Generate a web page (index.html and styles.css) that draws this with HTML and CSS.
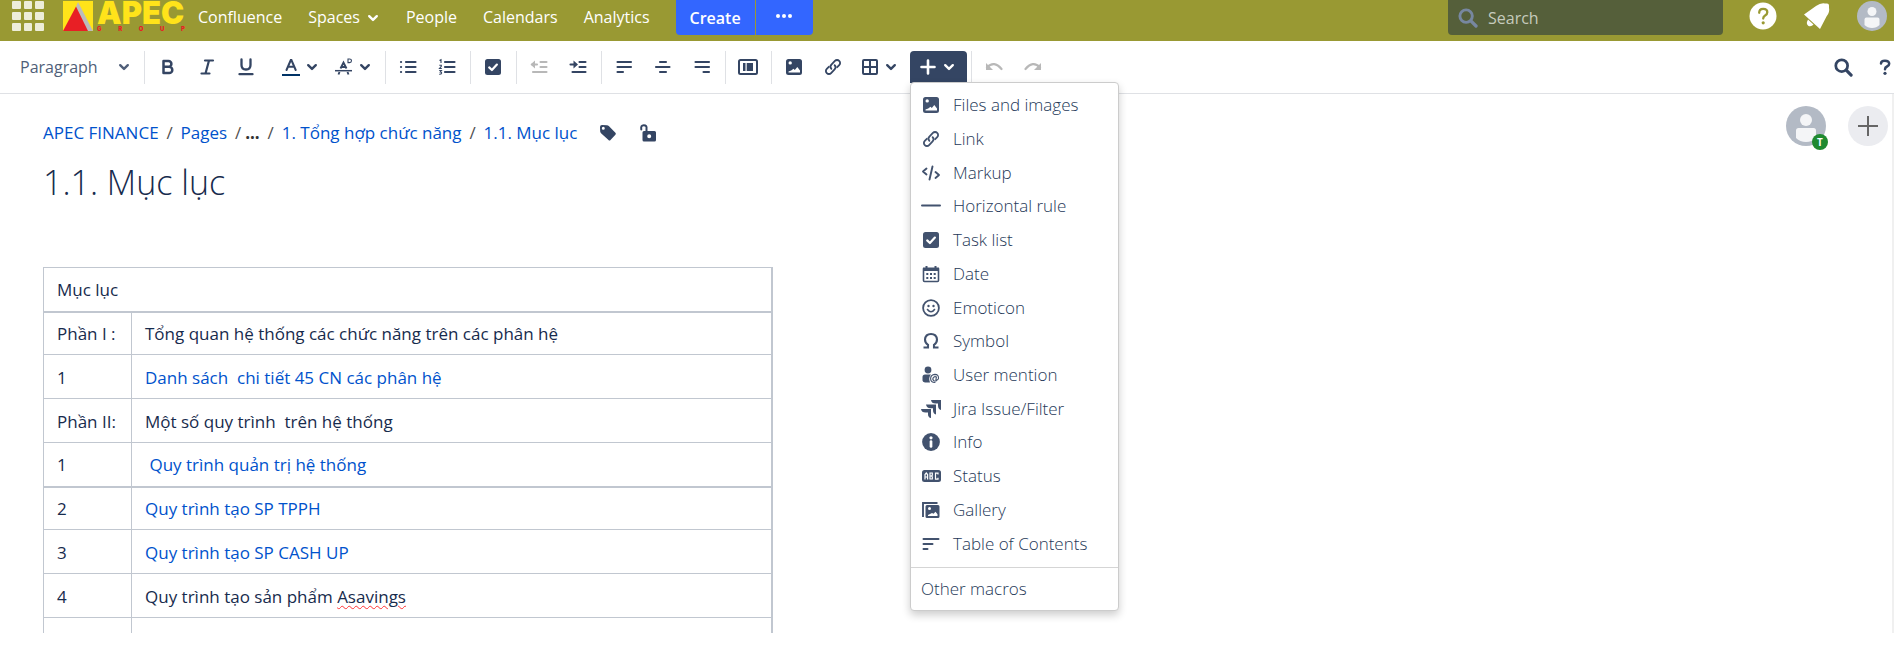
FILE: index.html
```html
<!DOCTYPE html>
<html lang="vi">
<head>
    <meta charset="UTF-8">
    <meta name="viewport" content="width=device-width, initial-scale=1.0">
    <title>1.1. Mục lục - Confluence</title>
    <link rel="stylesheet" href="styles.css">
</head>
<body>
    <!-- shared icons -->
    <svg class="sprite" aria-hidden="true">
        <symbol id="i-chevron" viewBox="0 0 14 14"><path d="M3.2 5.2 7 8.9l3.8-3.7" fill="none" stroke="currentColor" stroke-width="2.4" stroke-linecap="round" stroke-linejoin="round"/></symbol>
        <symbol id="i-image" viewBox="0 0 18 18"><path fill="currentColor" fill-rule="evenodd" d="M3.5 1h11A2.5 2.5 0 0 1 17 3.500v11a2.500 2.500 0 0 1-2.500 2.500h-11A2.500 2.500 0 0 1 1 14.500v-11A2.500 2.500 0 0 1 3.500 1zM5.200 3.200a1.700 1.700 0 1 0 0 3.400 1.700 1.700 0 0 0 0-3.400zM3.500 14.500h11.500v-2l-2.700-3.500-2.500 3-1.300-1.200-2.300 1.700-2.700 1z"/></symbol>
        <symbol id="i-link" viewBox="0 0 18 18"><g fill="none" stroke="currentColor" stroke-width="1.800" stroke-linecap="round"><path d="M7.400 10.800a3 3 0 0 1 0-4.200l3.500-3.700a3 3 0 0 1 4.300 0 3 3 0 0 1 0 4.300l-2 2"/><path d="M10.600 7.200a3 3 0 0 1 0 4.200l-3.500 3.700a3 3 0 0 1-4.300 0 3 3 0 0 1 0-4.300l2-2"/></g></symbol>
        <symbol id="i-check" viewBox="0 0 18 18"><rect x="1" y="1" width="16" height="16" rx="2.500" fill="currentColor"/><path d="M5.200 9.400l2.700 2.600 5-5.400" fill="none" stroke="#fff" stroke-width="2.200" stroke-linecap="round" stroke-linejoin="round"/></symbol>
        <symbol id="i-search" viewBox="0 0 18 18"><circle cx="7.300" cy="7.300" r="5.600" fill="none" stroke="currentColor" stroke-width="2.600"/><path d="M11.800 11.800l4.400 4.400" stroke="currentColor" stroke-width="3" stroke-linecap="round"/></symbol>
        <symbol id="i-user" viewBox="0 0 40 40"><circle cx="20" cy="20" r="20" fill="#b3bac5"/><circle cx="20" cy="14" r="6" fill="#f4f5f7"/><path d="M10 24.500A2.500 2.500 0 0 1 12.500 22h15a2.500 2.500 0 0 1 2.500 2.500V32q-4 4-10 4t-10-4z" fill="#f4f5f7"/></symbol>
    </svg>

    <header class="header">
        <button class="apps" aria-label="Linked applications">
            <svg width="32" height="32" viewBox="0 0 32 32" fill="#ededd9"><rect x="0" y="1" width="9" height="8" rx="1"/><rect x="12" y="1" width="8" height="8" rx="1"/><rect x="23" y="1" width="9" height="8" rx="1"/><rect x="0" y="12" width="9" height="8" rx="1"/><rect x="12" y="12" width="8" height="8" rx="1"/><rect x="23" y="12" width="9" height="8" rx="1"/><rect x="0" y="23" width="9" height="8" rx="1"/><rect x="12" y="23" width="8" height="8" rx="1"/><rect x="23" y="23" width="9" height="8" rx="1"/></svg>
        </button>
        <a class="logo" href="#" aria-label="Apec Group">
            <svg width="30" height="30" viewBox="0 0 30 30"><path fill="#ffe31a" d="M0 0h30v30H0z"/><path fill="#bcbcbc" d="M15 1 30 30h-6L13 6z"/><path fill="#e81f25" d="M13 5.500 25 30H0z"/></svg>
            <span class="logo-text">
                <span class="logo-name">APEC</span>
                <span class="logo-sub"><span>G</span><span>R</span><span>O</span><span>U</span><span>P</span></span>
            </span>
        </a>
        <nav class="nav">
            <a href="#">Confluence</a>
            <a href="#">Spaces<svg width="14" height="14"><use href="#i-chevron"/></svg></a>
            <a href="#">People</a>
            <a href="#">Calendars</a>
            <a href="#">Analytics</a>
        </nav>
        <div class="create">
            <button class="create-main">Create</button>
            <button class="create-more" aria-label="Create from template"><svg width="18" height="6" viewBox="0 0 18 6" fill="#fff"><circle cx="3" cy="3" r="2"/><circle cx="9" cy="3" r="2"/><circle cx="15" cy="3" r="2"/></svg></button>
        </div>
        <div class="header-right">
            <label class="search">
                <svg width="20" height="20"><use href="#i-search"/></svg>
                <input type="text" placeholder="Search" aria-label="Search">
            </label>
            <button aria-label="Help"><svg width="28" height="28" viewBox="0 0 28 28"><circle cx="14" cy="14" r="13.500" fill="#fff"/><path d="M10.200 10.800q0-4 4-4 4.100 0 4.100 3.500 0 2-2.200 3.300-1.900 1.100-1.900 3" fill="none" stroke="#993" stroke-width="2.300" stroke-linecap="round"/><circle cx="14.200" cy="20.800" r="1.600" fill="#993"/></svg></button>
            <button aria-label="Notifications"><svg width="28" height="28" viewBox="0 0 28 28" fill="#fff"><path d="M1 12.500 13 4q5-3.500 9-2.500h2q2 0 2 2v2q1 5-2.500 9L17 27z"/><path d="M5 17.500 10.500 22.500Q8.500 25 5.500 24 2.500 22 5 17.500z"/></svg></button>
            <button aria-label="Profile"><svg width="30" height="30"><use href="#i-user"/></svg></button>
        </div>
    </header>

    <div class="toolbar">
        <button class="format">Paragraph <svg width="14" height="14"><use href="#i-chevron"/></svg></button>
        <div class="group group-text">
            <button aria-label="Bold"><svg width="18" height="18" viewBox="0 0 18 18"><path d="M4.500 3h5a2.900 2.900 0 0 1 0 5.800h-5zM4.500 8.800h5.700a3.100 3.100 0 0 1 0 6.200H4.500z" fill="none" stroke="currentColor" stroke-width="2.500" stroke-linejoin="round"/></svg></button>
            <button aria-label="Italic"><svg width="18" height="18" viewBox="0 0 18 18"><path d="M7 2.500h8M3.500 15.500h8M11 2.500l-3.500 13" fill="none" stroke="currentColor" stroke-width="2.200" stroke-linecap="round"/></svg></button>
            <button aria-label="Underline"><svg width="18" height="18" viewBox="0 0 18 18"><path d="M4.500 1.500V7q0 4.500 4.500 4.500T13.500 7V1.500M2.500 16.200h13" fill="none" stroke="currentColor" stroke-width="2.300" stroke-linecap="round"/></svg></button>
            <button class="drop first" aria-label="Text colour"><svg width="18" height="18" viewBox="0 0 18 18"><path d="M4.500 12 8.800 2h.6l4.300 10M6 8.800h6.300" fill="none" stroke="currentColor" stroke-width="2" stroke-linecap="round"/><path d="M0 17h18" stroke="#003366" stroke-width="2"/></svg><svg width="14" height="14"><use href="#i-chevron"/></svg></button>
            <button class="drop" aria-label="More formatting"><svg width="18" height="18" viewBox="0 0 18 18" fill="none" stroke="currentColor"><path d="M5.500 10.500 8.500 4.500l3 6M4.500 14l-1 2.500M12.500 14l1 2.500M6 9h5" stroke-width="1.900"/><path d="M0 12.700h17" stroke-width="1.500"/><path d="M13 1h1.500q2 0 2 1.800T14.500 4.600H13z" stroke-width="1.100"/></svg><svg width="14" height="14"><use href="#i-chevron"/></svg></button>
        </div>
        <div class="group">
            <button aria-label="Bullet list"><svg width="18" height="18" viewBox="0 0 18 18"><path d="M7 4h9.500M7 9h9.500M7 14h9.500M2 4h.1M2 9h.1M2 14h.1" stroke="currentColor" stroke-width="2.200" stroke-linecap="round"/></svg></button>
            <button aria-label="Numbered list"><svg width="18" height="18" viewBox="0 0 18 18" fill="none" stroke="currentColor"><path d="M7 4h9.500M7 9h9.500M7 14h9.500" stroke-width="2.200" stroke-linecap="round"/><path d="M1.500 2.500 3 1.700V5M1.300 7.300h2v1L1.500 10.500h2.300M1.200 12.500h2.300L2.300 14q1.500 0 1.300 1.200T1.200 16.300" stroke-width="1.100"/></svg></button>
        </div>
        <div class="group">
            <button aria-label="Task list"><svg width="18" height="18"><use href="#i-check"/></svg></button>
        </div>
        <div class="group">
            <button class="off" aria-label="Outdent" disabled><svg width="18" height="18" viewBox="0 0 18 18"><path d="M10.500 4h6M10.500 9h6M3 14h13.500M2 6.500h5" stroke="currentColor" stroke-width="2.100" stroke-linecap="round"/><path d="M5 2.500v8L0.500 6.500z" fill="currentColor"/></svg></button>
            <button aria-label="Indent"><svg width="18" height="18" viewBox="0 0 18 18"><path d="M10.500 4h6M10.500 9h6M3.500 14h13M1.500 6.500h5" stroke="currentColor" stroke-width="2.100" stroke-linecap="round"/><path d="M4.500 2.500v8L9 6.500z" fill="currentColor"/></svg></button>
        </div>
        <div class="group">
            <button aria-label="Align left"><svg width="18" height="18" viewBox="0 0 18 18"><path d="M2.500 4h13.500M2.500 9h13.500M2.500 14h5.500" stroke="currentColor" stroke-width="2.100" stroke-linecap="round"/></svg></button>
            <button aria-label="Align center"><svg width="18" height="18" viewBox="0 0 18 18"><path d="M6 4h6M2 9h13.500M6 14h6" stroke="currentColor" stroke-width="2.100" stroke-linecap="round"/></svg></button>
            <button aria-label="Align right"><svg width="18" height="18" viewBox="0 0 18 18"><path d="M2.500 4H16M2.500 9H16M10.500 14H16" stroke="currentColor" stroke-width="2.100" stroke-linecap="round"/></svg></button>
        </div>
        <div class="group">
            <button aria-label="Page layout"><svg width="20" height="18" viewBox="0 0 20 18"><rect x="1" y="2" width="18" height="14" rx="1.500" fill="none" stroke="currentColor" stroke-width="2"/><path d="M5 5h2.500v8H5zM8.700 5H15v8H8.700z" fill="currentColor"/></svg></button>
        </div>
        <div class="group">
            <button aria-label="Files and images"><svg width="18" height="18"><use href="#i-image"/></svg></button>
            <button aria-label="Link"><svg width="18" height="18"><use href="#i-link"/></svg></button>
            <button class="drop" aria-label="Table"><svg width="18" height="18" viewBox="0 0 18 18"><path d="M3 2h12a1 1 0 0 1 1 1v12a1 1 0 0 1-1 1H3a1 1 0 0 1-1-1V3a1 1 0 0 1 1-1zM9 2v14M2 9h14" fill="none" stroke="currentColor" stroke-width="2"/></svg><svg width="14" height="14"><use href="#i-chevron"/></svg></button>
            <div class="insert">
                <button class="drop insert-toggle" aria-label="Insert more content" aria-expanded="true"><svg width="18" height="18" viewBox="0 0 18 18"><path d="M9 2.500v13M2.500 9h13" stroke="currentColor" stroke-width="2.600" stroke-linecap="round"/></svg><svg width="14" height="14"><use href="#i-chevron"/></svg></button>
                <div class="menu">
                    <ul>
                        <li><a href="#"><svg width="20" height="18"><use href="#i-image"/></svg>Files and images</a></li>
                        <li><a href="#"><svg width="20" height="18"><use href="#i-link"/></svg>Link</a></li>
                        <li><a href="#"><svg width="20" height="18" viewBox="0 0 20 18"><path d="M5.500 4.500 2 7.500l3.500 3M14.500 8l3.500 3-3.500 3M11.500 2.500 8.500 15.500" fill="none" stroke="currentColor" stroke-width="1.900" stroke-linecap="round" stroke-linejoin="round"/></svg>Markup</a></li>
                        <li><a href="#"><svg width="20" height="18" viewBox="0 0 20 18"><path d="M1 8.500h18" stroke="currentColor" stroke-width="2" stroke-linecap="round"/></svg>Horizontal rule</a></li>
                        <li><a href="#"><svg width="20" height="18"><use href="#i-check"/></svg>Task list</a></li>
                        <li><a href="#"><svg width="20" height="18" viewBox="0 0 20 18"><path d="M2.500 4h15v11.500a1 1 0 0 1-1 1h-13a1 1 0 0 1-1-1z" fill="none" stroke="currentColor" stroke-width="1.600"/><path d="M2 2.500h16V6H2z" fill="currentColor"/><path d="M5.500 1v3M14.500 1v3" stroke="currentColor" stroke-width="2"/><path d="M5.300 9h2M9 9h2M12.700 9h2M5.300 13h2M9 13h2M12.700 13h2" stroke="currentColor" stroke-width="2"/></svg>Date</a></li>
                        <li><a href="#"><svg width="20" height="18" viewBox="0 0 20 18"><circle cx="10" cy="9" r="7.900" fill="none" stroke="currentColor" stroke-width="1.800"/><circle cx="7.500" cy="7" r="1.200" fill="currentColor"/><circle cx="12.500" cy="7" r="1.200" fill="currentColor"/><path d="M6.500 10.500q3.500 4.500 7 0" fill="none" stroke="currentColor" stroke-width="1.600" stroke-linecap="round"/></svg>Emoticon</a></li>
                        <li><a href="#"><svg width="20" height="18" viewBox="0 0 20 18"><path d="M2.500 15.500H7v-2.700Q4 11 4 7.500 4.500 2 10 2t6 5.500q0 3.500-3 5.300v2.700h4.500" fill="none" stroke="currentColor" stroke-width="2.100"/></svg>Symbol</a></li>
                        <li><a href="#"><svg width="20" height="18" viewBox="0 0 20 18"><circle cx="7" cy="4" r="3.400" fill="currentColor"/><path d="M1.500 11a2.500 2.500 0 0 1 2.500-2.500h6Q7 12 9 16.500H4q-2.500-.5-2.500-2z" fill="currentColor"/><path d="M15.800 14.500q-1.500.8-2.800.3-1.800-.9-.8-3 1.300-2 3.200-.8l-.5 2.800q2 .7 2.600-1.500.2-3.700-3.600-3.900-4.200.3-4.300 4.300.3 4 4.800 3.800" fill="none" stroke="currentColor" stroke-width="1.100"/></svg>User mention</a></li>
                        <li><a href="#"><svg width="20" height="18" viewBox="0 0 20 18"><path d="M10 0h10v10q-3-.8-3-4.500V3.500h-2.500Q10.500 3.500 10 0zM5 4.500h10v10q-3-.8-3-4.500V8.200H9.500Q5.500 8 5 4.500zM0 9h10v9q-3-.5-3-3.800v-1.700H4.500Q.5 12.500 0 9z" fill="currentColor"/></svg>Jira Issue/Filter</a></li>
                        <li><a href="#"><svg width="20" height="18" viewBox="0 0 20 18"><circle cx="10" cy="9" r="8.900" fill="currentColor"/><circle cx="10" cy="4.800" r="1.600" fill="#fff"/><path d="M10 8.500v5" stroke="#fff" stroke-width="2.700" stroke-linecap="round"/></svg>Info</a></li>
                        <li><a href="#"><svg width="20" height="18" viewBox="0 0 20 18"><rect x="1" y="3" width="19" height="12" rx="2.500" fill="currentColor"/><path d="M4 12.500V7.500l1.300-1.500 1.300 1.500v5M4 10h2.600M9 6v6h2.300V9.800L10.500 9l.8-.8V6zM17 7.500V6.200h-2.500v5.900H17v-1.300M9 9h2" fill="none" stroke="#fff" stroke-width="1.200"/></svg>Status</a></li>
                        <li><a href="#"><svg width="20" height="18" viewBox="0 0 20 18"><path d="M2 16V2h14.500" fill="none" stroke="currentColor" stroke-width="1.900"/><path fill="currentColor" fill-rule="evenodd" d="M6 4h11a1.500 1.500 0 0 1 1.500 1.500v10A1.500 1.500 0 0 1 17 17H6a1.500 1.500 0 0 1-1.500-1.500v-10A1.500 1.500 0 0 1 6 4zm2.500 2a1.500 1.500 0 1 0 0 3 1.500 1.500 0 0 0 0-3zM7 15h9.500v-1.800l-2-2.500-2 2-1.500-.7-4 2z"/></svg>Gallery</a></li>
                        <li><a href="#"><svg width="20" height="18" viewBox="0 0 20 18"><path d="M2.500 4h15M2.500 9h9M2.500 14h4" stroke="currentColor" stroke-width="2" stroke-linecap="round"/></svg>Table of Contents</a></li>
                    </ul>
                    <a class="other" href="#">Other macros</a>
                </div>
            </div>
        </div>
        <div class="group">
            <button class="off" aria-label="Undo" disabled><svg width="18" height="18" viewBox="0 0 18 18"><path d="M2 9.500q7-7.500 14.500 1.500" fill="none" stroke="currentColor" stroke-width="2.200" stroke-linecap="round"/><path d="M1 5v7h7z" fill="currentColor"/></svg></button>
            <button class="off" aria-label="Redo" disabled><svg width="18" height="18" viewBox="0 0 18 18"><path d="M16 9.500q-7-7.500-14.500 1.500" fill="none" stroke="currentColor" stroke-width="2.200" stroke-linecap="round"/><path d="M17 5v7h-7z" fill="currentColor"/></svg></button>
        </div>
        <div class="toolbar-right">
            <button aria-label="Find"><svg width="19" height="19"><use href="#i-search"/></svg></button>
            <button class="hint" aria-label="Editor help"><svg width="18" height="18" viewBox="0 0 18 18"><path d="M5 5.500Q5 2.800 9 2.800q4.200 0 4.200 3 0 1.700-2.200 2.700Q9 9.400 9 11.300" fill="none" stroke="currentColor" stroke-width="2.500" stroke-linecap="round"/><circle cx="9" cy="15.300" r="1.600" fill="currentColor"/></svg></button>
        </div>
    </div>

    <main class="editor">
        <div class="page">
            <nav class="crumbs" aria-label="Breadcrumbs">
                <a href="#">APEC FINANCE</a><i>/</i><a href="#">Pages</a><i>/</i><button class="more" aria-label="Show hidden pages">...</button><i>/</i><a href="#">1. Tổng hợp chức năng</a><i>/</i><a href="#">1.1. Mục lục</a>
                <button class="tag" aria-label="Labels"><svg width="18" height="18" viewBox="0 0 18 18"><path fill="currentColor" fill-rule="evenodd" d="M1 3Q1 1 3 1l5 .3q1 0 1.800.8l6.600 6.700q1 1 0 2L11.500 16q-1 1-2 0L2.300 9.500Q1.300 8.500 1.200 7.500zM4.300 2.700a1.500 1.500 0 1 0 0 3 1.500 1.500 0 0 0 0-3z"/></svg></button>
                <button class="lock" aria-label="Restrictions"><svg width="18" height="18" viewBox="0 0 18 18"><path d="M2.300 5.500Q1.500 1.200 4.800 1.200T7.500 5v3" fill="none" stroke="currentColor" stroke-width="2" stroke-linecap="round"/><path fill="currentColor" fill-rule="evenodd" d="M5 7h10.500A1.500 1.500 0 0 1 17 8.500v7.500a1.500 1.500 0 0 1-1.500 1.500H5A1.500 1.500 0 0 1 3.500 16V8.500A1.500 1.500 0 0 1 5 7zm5.200 3.200a2 2 0 1 0 0 4 2 2 0 0 0 0-4z"/></svg></button>
            </nav>
            <h1>1.1. Mục lục</h1>
            <table>
                <tr><td colspan="2">Mục lục</td></tr>
                <tr class="thick"><td>Phần I :</td><td>Tổng quan hệ thống các chức năng trên các phân hệ</td></tr>
                <tr><td>1</td><td><a href="#">Danh sách&nbsp; chi tiết 45 CN các phân hệ</a></td></tr>
                <tr><td>Phần II:</td><td>Một số quy trình&nbsp; trên hệ thống</td></tr>
                <tr><td>1</td><td>&nbsp;<a href="#">Quy trình quản trị hệ thống</a></td></tr>
                <tr class="thick"><td>2</td><td><a href="#">Quy trình tạo SP TPPH</a></td></tr>
                <tr><td>3</td><td><a href="#">Quy trình tạo SP CASH UP</a></td></tr>
                <tr><td>4</td><td>Quy trình tạo sản phẩm <span class="typo">Asavings</span></td></tr>
                <tr><td>&nbsp;</td><td></td></tr>
            </table>
        </div>
        <div class="people">
            <span class="editor-user"><svg width="40" height="40"><use href="#i-user"/></svg><b>T</b></span>
            <button class="invite" aria-label="Invite people"><svg width="20" height="20" viewBox="0 0 20 20"><path d="M10 0v20M0 10h20" stroke="#666" stroke-width="2"/></svg></button>
        </div>
    </main>
</body>
</html>
```
FILE: styles.css
```css
* {
    box-sizing: border-box;
}

body {
    margin: 0;
    height: 100vh;
    display: flex;
    flex-direction: column;
    overflow: hidden;
    background: #fff;
    color: #172b4d;
    font-family: "Open Sans", "Noto Sans", sans-serif;
    font-size: 16px;
    line-height: 24px;
}

a {
    color: #0052cc;
    text-decoration: none;
}

button {
    display: flex;
    align-items: center;
    justify-content: center;
    padding: 0;
    border: 0;
    background: none;
    color: inherit;
    font: inherit;
}

svg {
    display: block;
    flex: none;
}

.sprite {
    position: absolute;
    width: 0;
    height: 0;
}

/* header */
.header {
    display: flex;
    align-items: flex-start;
    height: 41px;
    padding: 0 7px 0 12px;
    background: #999933;
    color: #fff;
}

.logo {
    display: flex;
    gap: 4px;
    margin: 1px 0 0 19px;
}

.logo-text {
    display: flex;
    flex-direction: column;
    width: 88px;
}

.logo-name {
    color: #ffe31a;
    font: 900 31px/24px Inter, sans-serif;
}

.logo-sub {
    display: flex;
    justify-content: space-between;
    color: #e81f25;
    font: 900 6px/8px Inter, sans-serif;
}

.nav {
    display: flex;
    gap: 26px;
    margin-left: 13px;
    line-height: 35px;
}

.nav a {
    display: flex;
    align-items: center;
    gap: 6px;
    color: #fff;
}

.create {
    display: flex;
    gap: 1px;
    height: 35px;
    margin-left: 26px;
}

.create button {
    background: #3366ff;
    color: #fff;
    font-weight: 600;
}

.create-main {
    width: 79px;
    border-radius: 0 0 0 4px;
}

.create-more {
    width: 57px;
    padding-bottom: 3px;
    border-radius: 0 0 4px 0;
}

.header-right {
    display: flex;
    align-items: center;
    gap: 26px;
    height: 35px;
    margin-left: auto;
}

.header-right button {
    padding-bottom: 3px;
}

.search {
    display: flex;
    align-items: center;
    gap: 10px;
    width: 275px;
    height: 35px;
    padding: 0 10px;
    border-radius: 0 0 4px 4px;
    background: #555f3a;
    color: #7787a0;
}

.search input {
    flex: 1;
    min-width: 0;
    padding: 0;
    border: 0;
    outline: 0;
    background: none;
    color: #fff;
    font: inherit;
}

.search input::placeholder {
    color: #c5cbbd;
}

/* toolbar */
.toolbar {
    display: flex;
    align-items: center;
    height: 53px;
    border-bottom: 1px solid #dfe1e5;
    color: #344563;
}

.format {
    justify-content: space-between;
    width: 144px;
    padding: 0 13px 0 20px;
    color: #505f79;
}

.group {
    display: flex;
    gap: 1px;
    height: 33px;
    padding: 0 4px 0 3px;
    border-left: 1px solid #dfe1e5;
}

.group-text {
    padding: 0 7px 0 4px;
}

.group button {
    width: 38px;
    height: 32px;
}

.group .drop {
    width: auto;
    gap: 5px;
    padding: 0 8px;
}

.group-text .drop {
    padding-right: 6px;
}

.group-text .first {
    margin: 0 1px 0 8px;
}

.off {
    color: #b8b8b8;
}

.insert {
    position: relative;
    margin-left: 3px;
}

.group .insert-toggle {
    padding: 0 11px 0 9px;
    border-radius: 4px 4px 0 0;
    background: #344563;
    color: #fff;
}

.toolbar-right {
    display: flex;
    gap: 23px;
    margin-left: auto;
}

/* insert menu */
.menu {
    position: absolute;
    top: 31px;
    left: 0;
    z-index: 2;
    width: 209px;
    border: 1px solid #ccc;
    border-radius: 4px;
    background: #fff;
    box-shadow: 0 4px 8px rgba(0, 0, 0, 0.2);
    font-size: 17px;
    font-weight: 300;
}

.menu ul {
    display: grid;
    grid-auto-rows: 1fr;
    height: 485px;
    margin: 0;
    padding: 6px 0;
    border-bottom: 1px solid #d5d5d5;
    list-style: none;
}

.menu a {
    display: flex;
    align-items: center;
    gap: 12px;
    height: 100%;
    padding: 0 10px;
    color: #253858;
}

.menu svg {
    color: #42526e;
}

.menu .other {
    height: 42px;
}

/* editor */
.editor {
    display: flex;
    flex: 1;
    justify-content: space-between;
    min-height: 0;
    margin-bottom: 15px;
    padding: 0 4px 0 43px;
    border-right: 2px solid #f0f0f0;
    overflow: hidden;
    font-size: 17px;
}

.crumbs {
    display: flex;
    align-items: center;
    padding-top: 27px;
}

.crumbs i {
    width: 22px;
    color: #505050;
    font-style: normal;
    text-align: center;
}

.crumbs .more {
    margin-left: -4px;
    color: #333;
    font-weight: 700;
}

.crumbs .tag,
.crumbs .lock {
    margin-left: 22px;
    color: #344563;
}

h1 {
    margin: 14px 0 62px;
    font-size: 34px;
    font-weight: 300;
    line-height: 46px;
}

table {
    width: 730px;
    border-collapse: collapse;
    border: 1px solid #c1c7d0;
    border-right-width: 2px;
}

td {
    height: 44px;
    padding: 2px 13px 0;
    border: 1px solid #c1c7d0;
}

tr td:last-child {
    border-right-width: 2px;
}

td:first-child:not([colspan]) {
    width: 88px;
}

.thick td {
    height: 43px;
    border-top-width: 2px;
}

.typo {
    text-decoration: underline wavy #f33 1px;
    text-underline-offset: 2px;
}

.people {
    display: flex;
    align-items: flex-start;
    gap: 22px;
    padding-top: 12px;
}

.editor-user {
    position: relative;
}

.editor-user b {
    position: absolute;
    right: -2px;
    bottom: -4px;
    width: 16px;
    border-radius: 8px;
    background: #1f8a30;
    color: #fff;
    font-size: 10px;
    line-height: 16px;
    text-align: center;
}

.invite {
    width: 40px;
    height: 40px;
    border-radius: 20px;
    background: #ebecf0;
}
```
